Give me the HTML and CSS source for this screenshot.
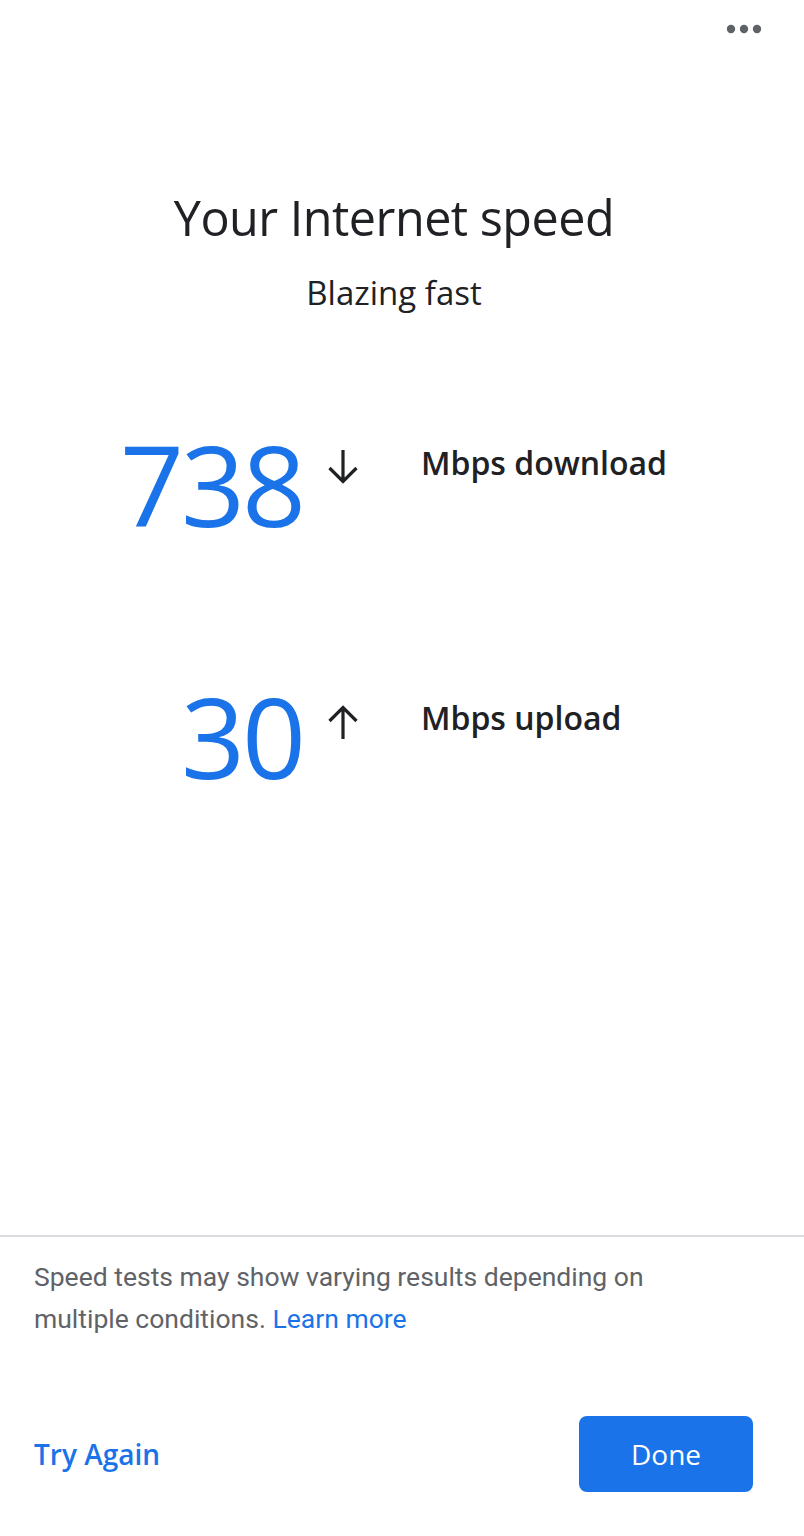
FILE: index.html
```html
<!DOCTYPE html>
<html lang="en">
<head>
  <meta charset="UTF-8">
  <meta name="viewport" content="width=device-width, initial-scale=1.0">
  <title>Internet speed</title>
  <link rel="stylesheet" href="styles.css">
</head>
<body>

  <div class="page">
    <div class="topbar">
      <button class="more" aria-label="More options">
        <svg width="36" height="10" viewBox="0 0 36 10">
          <circle cx="5" cy="5" r="4.2" fill="#5f6368"/>
          <circle cx="18" cy="5" r="4.2" fill="#5f6368"/>
          <circle cx="31" cy="5" r="4.2" fill="#5f6368"/>
        </svg>
      </button>
    </div>

    <h1 class="title">Your Internet speed</h1>
    <p class="subtitle">Blazing fast</p>

    <div class="results">
      <div class="result download">
        <span class="value">738</span>
        <svg class="arrow" width="36" height="36" viewBox="0 0 36 36">
          <path d="M18 2v31M4.5 20L18 33.5 31.5 20" fill="none" stroke="#202124" stroke-width="3.2"/>
        </svg>
        <span class="label">Mbps download</span>
      </div>
      <div class="result upload">
        <span class="value">30</span>
        <svg class="arrow" width="36" height="36" viewBox="0 0 36 36">
          <path d="M18 34V3M4.5 16L18 2.5 31.5 16" fill="none" stroke="#202124" stroke-width="3.2"/>
        </svg>
        <span class="label">Mbps upload</span>
      </div>
    </div>

    <div class="footer">
      <p class="note">Speed tests may show varying results depending on multiple conditions. <a href="#">Learn more</a></p>
      <div class="actions">
        <button class="btn-text">Try Again</button>
        <button class="btn-primary">Done</button>
      </div>
    </div>
  </div>

</body>
</html>
```

FILE: styles.css
```css
body {
  margin: 0;
  background-color: white;
  font-family: "Open Sans", Roboto, Arial, sans-serif;
  color: #202124;
}
.page {
  width: 804px;
  height: 1536px;
  display: flex;
  flex-direction: column;
}
.topbar {
  display: flex;
  justify-content: flex-end;
  padding: 21px 42px 0 0;
  height: 30px;
}
.more {
  background: none;
  border: none;
  padding: 0;
  margin-top: -14px;
  line-height: 0;
  cursor: pointer;
}
.title {
  margin: 134px 0 0;
  padding-right: 16px;
  text-align: center;
  font-size: 48.5px;
  font-weight: 400;
  line-height: 64px;
  letter-spacing: -0.5px;
}
.subtitle {
  margin: 22px 0 0;
  padding-right: 16px;
  text-align: center;
  font-size: 33px;
  line-height: 44px;
}
.results {
  margin-top: 104px;
  display: flex;
  flex-direction: column;
  gap: 122px;
}
.result {
  display: grid;
  grid-template-columns: 303px 58px auto;
  align-items: start;
}
.value {
  text-align: right;
  color: #1a73e8;
  font-size: 112px;
  line-height: 130px;
  letter-spacing: -3px;
}
.arrow {
  margin: 29px 0 0 22px;
}
.label {
  margin: 24px 0 0 60px;
  font-size: 32px;
  font-weight: 600;
  line-height: 40px;
}
.upload .arrow {
  margin-top: 34px;
}
.upload .label {
  margin-top: 27px;
}
.footer {
  margin-top: auto;
  border-top: 2px solid #dadce0;
  padding: 19px 34px 44px;
}
.note {
  margin: 0;
  max-width: 630px;
  font-family: Roboto, Arial, sans-serif;
  font-size: 26.5px;
  line-height: 42px;
  color: #5f6368;
}
.note a {
  color: #1a73e8;
  text-decoration: none;
}
.actions {
  margin-top: 76px;
  display: flex;
  justify-content: space-between;
  align-items: center;
}
.btn-text {
  background: none;
  border: none;
  padding: 0;
  font-family: "Open Sans", Roboto, sans-serif;
  font-size: 28px;
  font-weight: 600;
  color: #1a73e8;
  cursor: pointer;
}
.btn-primary {
  width: 174px;
  height: 76px;
  margin-right: 17px;
  background-color: #1a73e8;
  color: white;
  border: none;
  border-radius: 8px;
  font-family: "Open Sans", Roboto, sans-serif;
  font-size: 28px;
  font-weight: 500;
  cursor: pointer;
}
```
